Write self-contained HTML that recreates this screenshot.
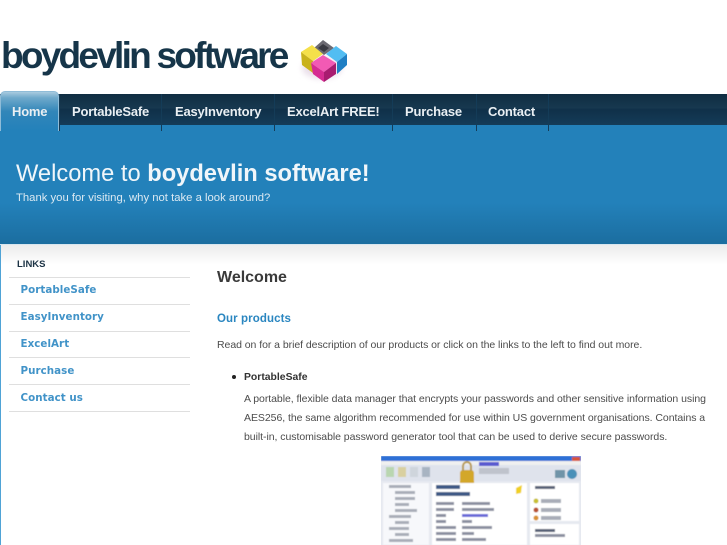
<!DOCTYPE html>
<html><head><meta charset="utf-8">
<style>
html,body{margin:0;padding:0;background:#fff}
body{width:727px;height:545px;overflow:hidden;position:relative;font-family:"Liberation Sans",sans-serif}
.a{position:absolute;white-space:nowrap}
.sep{position:absolute;top:94px;width:1px;height:37px;background:#143c58}
.nav{position:absolute;top:103px;font-size:13px;font-weight:bold;color:#e9eff3;letter-spacing:-.2px;line-height:17px;white-space:nowrap}
.sl{position:absolute;left:20.5px;font:bold 10.3px "DejaVu Sans",sans-serif;color:#4193c8;letter-spacing:.05px;line-height:14px;white-space:nowrap}
.hr{position:absolute;left:9px;width:181px;height:1px;background:#dfdfdf}
.p{position:absolute;font-size:10.5px;line-height:19px;color:#4c4c4c;white-space:nowrap;letter-spacing:-.05px}
</style></head><body>
<div class="a" style="left:1px;top:32px;font-size:37px;font-weight:bold;letter-spacing:-2.75px;color:#163549;line-height:48px">boydevlin software</div>
<svg class="a" style="left:296px;top:36px" width="54" height="48" viewBox="0 0 54 48">
<defs><filter id="g" x="-30%" y="-30%" width="160%" height="160%"><feGaussianBlur stdDeviation="3"/></filter></defs>
<ellipse cx="26" cy="32" rx="20" ry="11" fill="#eadfea" filter="url(#g)"/>
<path d="M18 12 27 4 38 12 28 19Z" fill="#6c6a72"/><path d="M22 12 27 8 33 12 28 16Z" fill="#3a3a42"/>
<path d="M5 16 16 9 27 18 17 25Z" fill="#f5e04a"/><path d="M5 16 17 25V37L6 29Z" fill="#c9b21c"/>
<path d="M30 18 40 10 51 18 41 26Z" fill="#52bdf2"/><path d="M41 26 51 18V29L41 38Z" fill="#1f7fc4"/>
<path d="M15 27 27 19 40 27 28 36Z" fill="#f25ab4"/><path d="M15 27 28 36V46L17 38Z" fill="#d62c92"/><path d="M28 36 40 27V38L28 46Z" fill="#a81c70"/>
</svg>
<div class="a" style="left:0;top:94px;width:727px;height:31px;background:linear-gradient(#0f2d42 0,#17384f 45%,#103049 50%,#143c58 100%)"></div>
<div class="a" style="left:0;top:125px;width:727px;height:120px;background:linear-gradient(#2381ba 0,#2381ba 65%,#1b6d9f 100%)"></div>
<div class="a" style="left:0;top:91px;width:59px;height:40px;background:linear-gradient(#a9cbdf 0,#6fa9cb 15%,#3286b9 50%,#2381ba 100%);border-radius:5px 5px 0 0;box-sizing:border-box;border:1px solid #8fbcd8;border-bottom:0"></div>
<div class="sep" style="left:59px"></div><div class="sep" style="left:161px"></div><div class="sep" style="left:274px"></div><div class="sep" style="left:392px"></div><div class="sep" style="left:476px"></div><div class="sep" style="left:548px"></div>
<div class="nav" style="left:12px">Home</div>
<div class="nav" style="left:72px">PortableSafe</div>
<div class="nav" style="left:175px">EasyInventory</div>
<div class="nav" style="left:287px">ExcelArt FREE!</div>
<div class="nav" style="left:405px">Purchase</div>
<div class="nav" style="left:488px">Contact</div>
<div class="a" style="left:16px;top:158px;font-size:23.7px;line-height:32px;color:#f0f6fa">Welcome to <b>boydevlin software!</b></div>
<div class="a" style="left:16px;top:190px;font-size:11.3px;line-height:16px;color:#dbe9f2">Thank you for visiting, why not take a look around?</div>
<div class="a" style="left:0;top:245px;width:727px;height:20px;background:linear-gradient(#ececec,#fff)"></div>
<div class="a" style="left:0;top:244px;width:727px;height:1px;background:#d8e6ef"></div>
<div class="a" style="left:0;top:245px;width:1px;height:300px;background:#4fa3d6"></div>
<div class="a" style="left:17px;top:258px;font-size:9.5px;font-weight:bold;line-height:13px;color:#1c3345">LINKS</div>
<div class="hr" style="top:277px"></div><div class="hr" style="top:304px"></div><div class="hr" style="top:331px"></div><div class="hr" style="top:357px"></div><div class="hr" style="top:384px"></div><div class="hr" style="top:411px"></div>
<div class="sl" style="top:283px">PortableSafe</div>
<div class="sl" style="top:310px">EasyInventory</div>
<div class="sl" style="top:337px">ExcelArt</div>
<div class="sl" style="top:364px">Purchase</div>
<div class="sl" style="top:391px">Contact us</div>
<div class="a" style="left:217px;top:268px;font-size:16px;font-weight:bold;line-height:20px;color:#3a3a3a">Welcome</div>
<div class="a" style="left:217px;top:312px;font-size:11.5px;font-weight:bold;line-height:15px;color:#2a86c0;letter-spacing:.1px">Our products</div>
<div class="p" style="left:217px;top:336px">Read on for a brief description of our products or click on the links to the left to find out more.</div>
<div class="a" style="left:232px;top:375px;width:4px;height:4px;border-radius:50%;background:#222"></div>
<div class="p" style="left:244px;top:368px;font-weight:bold;letter-spacing:0;color:#333;font-size:10.4px">PortableSafe</div>
<div class="p" style="left:244px;top:390px">A portable, flexible data manager that encrypts your passwords and other sensitive information using</div>
<div class="p" style="left:244px;top:409px">AES256, the same algorithm recommended for use within US government organisations. Contains a</div>
<div class="p" style="left:244px;top:428px">built-in, customisable password generator tool that can be used to derive secure passwords.</div>
<svg class="a" style="left:381px;top:456px" width="200" height="89" viewBox="0 0 200 89">
<defs><filter id="b"><feGaussianBlur stdDeviation=".45"/></filter></defs>
<rect width="200" height="89" fill="#e6e9f0"/>
<g filter="url(#b)">
<rect width="200" height="5" fill="#2f6fd6"/><rect x="191" y="1" width="8" height="4" fill="#d8553a"/>
<rect y="5" width="200" height="4" fill="#f0f0f0"/>
<rect y="9" width="200" height="16" fill="#dfe3ec"/>
<rect x="5" y="11" width="8" height="10" fill="#b9d6b0"/><rect x="17" y="11" width="8" height="10" fill="#d9d0a0"/><rect x="29" y="11" width="8" height="10" fill="#cfd5dc"/><rect x="41" y="11" width="8" height="10" fill="#a8b4c2"/>
<rect x="79" y="14" width="14" height="22" rx="3" fill="#d3a72c"/><path d="M82 15v-5a4 4 0 0 1 8 0v5" fill="none" stroke="#b89a50" stroke-width="2"/>
<rect x="98" y="6" width="20" height="4" fill="#5a5ad0"/><rect x="98" y="12" width="30" height="6" fill="#bfc3cc"/>
<rect x="174" y="14" width="10" height="8" fill="#6f94a8"/><rect x="186" y="13" width="10" height="10" rx="5" fill="#4a90b8"/>
<rect x="2" y="27" width="46" height="62" fill="#f7f8fb"/>
<g fill="#a9adb8"><rect x="8" y="29" width="22" height="3"/><rect x="14" y="35" width="20" height="3"/><rect x="14" y="41" width="20" height="3"/><rect x="14" y="47" width="14" height="3"/><rect x="14" y="53" width="22" height="3"/><rect x="8" y="59" width="22" height="3"/><rect x="14" y="65" width="14" height="3"/><rect x="8" y="71" width="20" height="3"/><rect x="14" y="77" width="14" height="3"/><rect x="8" y="83" width="24" height="3"/></g>
<rect x="51" y="27" width="95" height="62" fill="#fff"/>
<rect x="55" y="29" width="24" height="4" fill="#3f5a86"/><rect x="55" y="36" width="34" height="4" fill="#3f5a86"/>
<path d="M135 32l6-3-1 8-5 1z" fill="#f0d020"/>
<g fill="#8b90a0"><rect x="55" y="46" width="18" height="3"/><rect x="55" y="52" width="18" height="3"/><rect x="55" y="58" width="10" height="3"/><rect x="55" y="64" width="10" height="3"/><rect x="55" y="70" width="20" height="3"/><rect x="55" y="76" width="20" height="3"/><rect x="55" y="82" width="20" height="3"/>
<rect x="81" y="46" width="28" height="3"/><rect x="81" y="52" width="32" height="3"/><rect x="81" y="64" width="10" height="3"/><rect x="81" y="70" width="30" height="3"/><rect x="81" y="76" width="12" height="3"/><rect x="81" y="82" width="24" height="3"/></g>
<rect x="81" y="58" width="26" height="3" fill="#6a6ad8"/>
<rect x="149" y="27" width="49" height="38" fill="#fff"/><rect x="149" y="68" width="49" height="21" fill="#fff"/>
<circle cx="155" cy="45" r="2.5" fill="#c8c030"/><circle cx="155" cy="54" r="2.5" fill="#b85030"/><circle cx="155" cy="62" r="2.5" fill="#d89030"/>
<rect x="154" y="30" width="20" height="3" fill="#5a6478"/><rect x="154" y="73" width="20" height="3" fill="#5a6478"/><rect x="154" y="78" width="30" height="3" fill="#8b90a0"/>
<rect x="160" y="43" width="20" height="4" fill="#a9adb8"/><rect x="160" y="52" width="20" height="4" fill="#a9adb8"/><rect x="160" y="60" width="20" height="4" fill="#a9adb8"/>
</g>
</svg>
</body></html>
